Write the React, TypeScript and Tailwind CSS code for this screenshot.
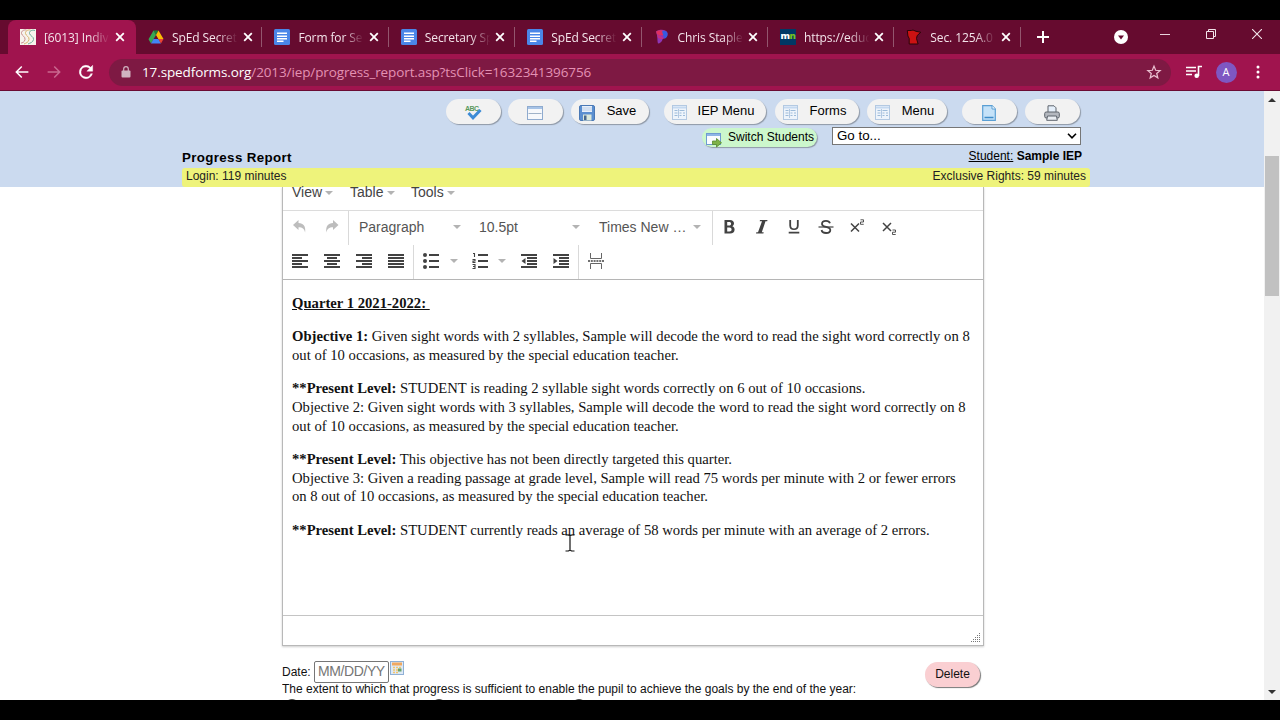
import type { ReactNode } from 'react'

const tabs = [
  { label: '[6013] Indiv', icon: <SpedIcon />, active: true },
  { label: 'SpEd Secret', icon: <DriveIcon /> },
  { label: 'Form for Se', icon: <DocsIcon /> },
  { label: 'Secretary Sp', icon: <DocsIcon /> },
  { label: 'SpEd Secret', icon: <DocsIcon /> },
  { label: 'Chris Staple', icon: <PeardeckIcon /> },
  { label: 'https://educ', icon: <MnIcon /> },
  { label: 'Sec. 125A.0', icon: <MinnesotaIcon /> },
]

function SpedIcon() {
  return (
    <svg viewBox="0 0 16 16" className="h-4 w-4 bg-[#f7f3ec]" fill="none" strokeWidth="1">
      <path d="M6.500 1C4 .5 1 2 1.500 4.500s4 3 3.500 6S2 14 1 14" stroke="#c98d8d" />
      <path d="M10.500 1C8 .5 5 2 5.500 4.500s4 3 3.500 6S6 14 4 15" stroke="#d8b36a" />
      <path d="M15 1.500C12 .5 9 2 9.500 4.500s4.500 3 4 6S10 14 8 15" stroke="#6fae9c" />
    </svg>
  )
}

function DriveIcon() {
  return (
    <svg viewBox="0 0 16 16" className="h-4 w-4">
      <path d="M5.500 1.500h5L8 6z" fill="#188038" />
      <path d="M5.500 1.500 8 6 3 14.500.500 10.300z" fill="#34a853" />
      <path d="M10.500 1.500 15.500 10H10.400L8 6z" fill="#fbbc04" />
      <path d="M5.500 10h4.900L13 14.500H3z" fill="#4285f4" />
      <path d="M10.400 10h5.100L13 14.500z" fill="#ea4335" />
    </svg>
  )
}

function DocsIcon() {
  return (
    <svg viewBox="0 0 16 16" className="h-4 w-4">
      <rect width="16" height="16" rx="1.500" fill="#4a86e8" />
      <path d="M3 4.200h10M3 7.200h10M3 9.800h10M3 12.300h6.500" stroke="#fff" strokeWidth="1.400" />
    </svg>
  )
}

function PeardeckIcon() {
  return (
    <svg viewBox="0 0 16 16" className="h-4 w-4">
      <path d="M2 2.500c3-2.300 10-2.500 11.300 1 1 4-2 6-4.600 6.500-.7 3-2.700 4.300-4.700 4.500C3 11 4 8 2 2.500z" fill="#8e36b5" />
      <path d="M2.200 2.500c3-2 8.300-1.500 9.300 2-2 2-5 2.700-8.600.8z" fill="#e0305f" />
      <path d="M8 2.500c2-1.500 5-.5 5.500 2s-1 4.500-3 5.200z" fill="#365be0" />
      <path d="M3.200 6c2 0 5 1.500 6 3.500-1 1-3 .5-5.200-.5z" fill="#c52f83" />
    </svg>
  )
}

function MnIcon() {
  return (
    <span className="flex h-4 w-4 items-center justify-center bg-[#003865] pb-0.5 font-['Open_Sans',sans-serif] text-[9.500px] leading-none font-extrabold tracking-[-0.6px] text-white">
      m<span className="text-[#78be21]">n</span>
    </span>
  )
}

function MinnesotaIcon() {
  return (
    <svg viewBox="0 0 16 16" className="h-4 w-4">
      <path d="M1.300 1.500h4L7 1l3 1.300 4.800 1-3.600 3.200-.7 3 1.600 5.500H3.200V9.500L1.900 7z" fill="#cc1212" stroke="#2b0508" strokeWidth="1" />
    </svg>
  )
}

function TabStrip() {
  return (
    <div className="flex h-[34px] bg-[#660b2f] pl-2">
      {tabs.map((tab, i) => (
        <div
          key={i}
          className={`flex shrink-0 items-center pl-3 ${
            tab.active ? 'w-[128px] rounded-t-lg bg-[#a0144e]' : 'w-[126.400px]'
          }`}
        >
          <span className="w-4 shrink-0">{tab.icon}</span>
          <span className="ml-[8px] w-[78px] shrink-0 pt-px text-[12px] tracking-[-0.1px] whitespace-nowrap text-[#f3e4ea] [mask-image:linear-gradient(to_right,black_58%,transparent_84%)]">
            {tab.label}
          </span>
          <svg viewBox="0 0 10 10" className="ml-[-7.500px] h-[10px] w-[10px] shrink-0" stroke="#fff" strokeWidth="1.800">
            <path d="M1.200 1.200l7.600 7.600M8.800 1.200 1.200 8.800" />
          </svg>
          {!tab.active && <span className="ml-auto h-5 w-px bg-[#93566e]" />}
        </div>
      ))}
      <div className="flex w-[44px] items-center justify-center">
        <svg viewBox="0 0 12 12" className="h-3 w-3" stroke="#fff" strokeWidth="2">
          <path d="M6 0v12M0 6h12" />
        </svg>
      </div>
      <svg viewBox="0 0 14 14" className="mt-[10px] ml-[49px] h-[14px] w-[14px]">
        <circle cx="7" cy="7" r="7" fill="#fff" />
        <path d="M4 5.500h6L7 9.500z" fill="#660b2f" />
      </svg>
      <svg viewBox="0 0 10 10" className="mt-[9px] ml-[32.500px] h-[10px] w-[10px]" stroke="#e9d3dc">
        <path d="M0 5.500h10" />
      </svg>
      <svg viewBox="0 0 10 10" className="mt-[9px] ml-[35.500px] h-[10px] w-[10px]" stroke="#f3e4ea" fill="none">
        <path d="M.500 2.500h7v7h-7zM2.500 2.500v-2h7v7h-2" />
      </svg>
      <svg viewBox="0 0 10 10" className="mt-[9px] ml-[36px] h-[10px] w-[10px]" stroke="#f3e4ea" strokeWidth="1.100">
        <path d="M0 0l10 10M10 0 0 10" />
      </svg>
    </div>
  )
}

function AddressBar() {
  return (
    <div className="flex h-[37px] items-center border-b border-[#6b0b33] bg-[#a0144e]">
      <svg viewBox="0 0 24 24" className="ml-[13px] h-[18px] w-[18px]" fill="#fff">
        <path d="M20.500 11H6.800l5.600-5.600L11 4l-8 8 8 8 1.400-1.400L6.800 13h13.700z" />
      </svg>
      <svg viewBox="0 0 24 24" className="ml-[14px] h-[18px] w-[18px]" fill="#c9688f">
        <path d="M3.500 11h13.700l-5.600-5.600L13 4l8 8-8 8-1.400-1.400 5.600-5.600H3.500z" />
      </svg>
      <svg viewBox="0 0 24 24" className="ml-[13px] h-[20px] w-[20px]" fill="#fff">
        <path d="M17.650 6.350A8 8 0 1 0 19.730 14h-2.080A6 6 0 1 1 12 6c1.660 0 3.140.69 4.220 1.780L13 11h7V4z" stroke="#fff" strokeWidth=".5" />
      </svg>
      <div className="ml-[13px] flex h-[27px] w-[1062px] items-center rounded-full bg-[#7e1943] pr-[9px] pl-[12px]">
        <svg viewBox="0 0 10 12" className="h-3 w-[10px]">
          <rect x=".5" y="4.500" width="9" height="7" rx="1" fill="#d0b3c0" />
          <path d="M2.700 5V3a2.300 2.300 0 0 1 4.600 0v2" fill="none" stroke="#d0b3c0" strokeWidth="1.200" />
        </svg>
        <span className="ml-[11px] text-[13.500px] tracking-[-0.115px] whitespace-nowrap text-[#e391b3]">
          <span className="text-white">17.spedforms.org</span>/2013/iep/progress_report.asp?tsClick=1632341396756
        </span>
        <svg viewBox="0 0 24 24" className="ml-auto h-[16px] w-[16px]" fill="none" stroke="#eabfd0" strokeWidth="1.900">
          <path d="M12 3.200l2.500 6.200 6.700.5-5.100 4.300 1.600 6.500L12 17.200l-5.700 3.500 1.600-6.500-5.100-4.300 6.700-.5z" />
        </svg>
      </div>
      <svg viewBox="0 0 16 14" className="ml-[15px] h-[14px] w-4" stroke="#fff" strokeWidth="1.600" fill="none">
        <path d="M0 2.500h10M0 6h10M0 9.500h6M12.500 11V1.500H16" />
        <circle cx="10.700" cy="10.800" r="1.500" fill="#fff" />
      </svg>
      <span className="ml-[13.500px] flex h-[21px] w-[21px] items-center justify-center rounded-full bg-[#7e57c2] text-[11px] text-white">A</span>
      <svg viewBox="0 0 4 14" className="ml-[19px] h-[14px] w-1" fill="#fff">
        <circle cx="2" cy="2" r="1.500" />
        <circle cx="2" cy="7" r="1.500" />
        <circle cx="2" cy="12" r="1.500" />
      </svg>
    </div>
  )
}

function FormIcon() {
  return (
    <svg viewBox="0 0 15 15" className="h-[15px] w-[15px]">
      <rect x=".5" y=".5" width="14" height="14" fill="#eef4fb" stroke="#b3c9e2" />
      <path d="M1 2.500h13" stroke="#c4d9f0" strokeWidth="2" />
      <path d="M2.500 5.500h3M2.500 8h3M2.500 10.500h3M7.500 5.500h5M7.500 8h2M7.500 10.500h2M11 8h2M11 10.500h2" stroke="#9dbbd9" />
      <path d="M6.500 4v9" stroke="#b3c9e2" />
    </svg>
  )
}

function SaveIcon() {
  return (
    <svg viewBox="0 0 16 16" className="h-4 w-4">
      <rect x=".5" y=".5" width="15" height="15" rx="1.500" fill="#5b8fd0" stroke="#4b79b5" />
      <rect x="3" y="1" width="10" height="6" fill="#e8f0fa" />
      <path d="M3 3h10M3 5h10" stroke="#a9c1df" strokeWidth=".7" />
      <rect x="4" y="9.500" width="8.500" height="6" fill="#dbe8da" />
      <rect x="5" y="10.500" width="2.500" height="4.500" fill="#49698d" />
    </svg>
  )
}

function SpellIcon() {
  return (
    <svg viewBox="0 0 18 16" className="h-4 w-[18px]">
      <text x="1" y="6" fontSize="7" fontWeight="bold" fontFamily="Liberation Sans, sans-serif" fill="#5b9a5f" textLength="14">ABC</text>
      <path d="M4.500 8l4.500 4.800L16.500 5" fill="none" stroke="#3c8bd6" strokeWidth="3" />
    </svg>
  )
}

function WindowIcon() {
  return (
    <svg viewBox="0 0 16 14" className="h-[14px] w-4">
      <rect x=".5" y=".5" width="15" height="13" fill="#f6f8fb" stroke="#8fabcf" />
      <path d="M1 2h14" stroke="#a7c3e6" strokeWidth="2" />
      <path d="M1.500 7.500h13" stroke="#9fb2c8" />
    </svg>
  )
}

function PageIcon() {
  return (
    <svg viewBox="0 0 14 16" className="h-4 w-[14px]">
      <path d="M.700.700h9.300l3.300 3.300v11.300H.700z" fill="#c5e2f8" stroke="#5a9fd4" strokeWidth="1.200" />
      <path d="M10 .7V4h3.300" fill="#fff" stroke="#5a9fd4" />
      <path d="M2.500 12.500h9" stroke="#3f8cc9" strokeWidth="1.500" />
    </svg>
  )
}

function PrinterIcon() {
  return (
    <svg viewBox="0 0 16 16" className="h-4 w-4" stroke="#5e646d">
      <path d="M4 8V.800h6l2 2V8" fill="#e5effa" />
      <rect x=".7" y="7" width="14.600" height="6" rx="1.500" fill="#b4b8bf" />
      <path d="M3.500 11h9l.8 4.300H2.700z" fill="#e9edf2" />
    </svg>
  )
}

const pill = 'flex h-[25px] shrink-0 items-center rounded-full bg-[#f2f2f2] shadow-[1px_1px_1px_#8f98a6]'

function HeaderButton({ icon, label, className }: { icon: ReactNode; label?: string; className: string }) {
  return (
    <button className={`${pill} ${label ? 'pl-2' : 'justify-center pr-px'} ${className}`}>
      <span className="mt-[2px]">{icon}</span>
      {label && <span className="flex-1 pr-[1px] pb-[2px] text-center text-[13px] leading-none">{label}</span>}
    </button>
  )
}

function PageHeader() {
  return (
    <header className="flex h-24 flex-col bg-[#cbdaef] pl-[182px]">
      <div className="mt-2 flex h-[28px] w-[899px] pl-[264px]">
        <HeaderButton className="w-[55px]" icon={<SpellIcon />} />
        <HeaderButton className="ml-[7px] w-[55px]" icon={<WindowIcon />} />
        <HeaderButton className="ml-[8px] w-[78px]" icon={<SaveIcon />} label="Save" />
        <HeaderButton className="ml-[15px] w-[102px]" icon={<FormIcon />} label="IEP Menu" />
        <HeaderButton className="ml-[9px] w-[84px]" icon={<FormIcon />} label="Forms" />
        <HeaderButton className="ml-[8px] w-[80px]" icon={<FormIcon />} label="Menu" />
        <HeaderButton className="ml-[15px] w-[55px]" icon={<PageIcon />} />
        <HeaderButton className="ml-[8px] w-[55px]" icon={<PrinterIcon />} />
      </div>
      <div className="flex h-[20px] w-[899px] justify-end">
        <button className="mt-px flex h-[19px] w-[115px] items-center rounded-full bg-[#ccf7cc] pl-1 text-[12px] shadow-[1px_1px_1px_#8f98a6]">
          <svg viewBox="0 0 16 16" className="mt-1 h-4 w-4 shrink-0">
            <rect x=".5" y="1.500" width="14" height="11" fill="#fafcff" stroke="#6f9bd1" />
            <path d="M1 3h13" stroke="#8fb6e6" strokeWidth="2" />
            <path d="M6.500 9h4V6.500l5 4.300-5 4.200v-2.500h-4z" fill="#7fb248" stroke="#568a2c" strokeWidth=".8" />
          </svg>
          <span className="ml-[6px] pb-[2px] whitespace-nowrap">Switch Students</span>
        </button>
        <div className="ml-[15px] flex h-[18px] w-[249px] items-center justify-between border border-[#767676] bg-white pr-[3px] pl-[4px] text-[13.333px]">
          <span className="leading-none">Go to...</span>
          <svg viewBox="0 0 10 6" className="h-[6px] w-[10px]" fill="none" stroke="#000" strokeWidth="1.600">
            <path d="M1 .800l4 4 4-4" />
          </svg>
        </div>
      </div>
      <div className="flex h-[21px] w-[900px] items-start justify-between">
        <h1 className="mt-[4px] text-[13.333px] leading-none font-bold tracking-[0.360px]">Progress Report</h1>
        <p className="mt-[3px] text-[12px] leading-none">
          <span className="underline">Student:</span> <b>Sample IEP</b>
        </p>
      </div>
      <div className="flex h-[19px] w-[908px] justify-between rounded-[3px] bg-[#eef37b] pt-[2px] pr-[4px] pl-[4px] text-[12px] leading-[13px] text-[#222]">
        <span>Login: 119 minutes</span>
        <span>Exclusive Rights: 59 minutes</span>
      </div>
    </header>
  )
}

function Caret({ className = '' }: { className?: string }) {
  return (
    <svg viewBox="0 0 8 4" className={`h-1 w-2 shrink-0 ${className}`} fill="#b3b3b3">
      <path d="M0 0h8L4 4z" />
    </svg>
  )
}

function ToolButton({ children }: { children: ReactNode }) {
  return (
    <button className="flex h-full w-8 shrink-0 items-center justify-center pb-[2px]">
      <svg viewBox="0 0 16 16" className="h-4 w-4" fill="#424242">
        {children}
      </svg>
    </button>
  )
}

function Divider() {
  return <span className="h-full w-px shrink-0 bg-[#d9d9d9]" />
}

function Dropdown({ label, className }: { label: string; className: string }) {
  return (
    <button className={`flex shrink-0 items-center justify-between pb-[2px] ${className}`}>
      <span className="whitespace-nowrap">{label}</span>
      <Caret />
    </button>
  )
}

function EditorToolbar() {
  return (
    <div className="flex h-[69px] shrink-0 flex-col border-b border-[#b5b5b5] text-[14px] text-[#555]">
      <div className="flex h-[34px] pl-px">
        <ToolButton>
          <path d="M1 6 6.500 1v3c5 0 7.500 3.500 6.600 9.500C12.300 9.800 10.500 8.300 6.500 8.300V11z" fill="#bdbdbd" />
        </ToolButton>
        <ToolButton>
          <path d="M14.500 6 9 1v3C4 4 1.500 7.500 2.400 13.500 3.200 9.800 5 8.300 9 8.300V11z" fill="#bdbdbd" />
        </ToolButton>
        <Divider />
        <Dropdown label="Paragraph" className="ml-[10px] w-[102px]" />
        <Dropdown label="10.5pt" className="ml-[18px] w-[101px]" />
        <Dropdown label="Times New …" className="ml-[19px] w-[102px]" />
        <span className="w-[11px]" />
        <Divider />
        <ToolButton>
          <path d="M3.500 1h5.500c2.500 0 4 1.300 4 3.300 0 1.300-.7 2.400-1.700 2.900 1.500.5 2.300 1.700 2.300 3.200 0 2.700-1.700 4.100-4.500 4.100H3.500zm2.700 2v3.500h1.900c1.300 0 2-.6 2-1.800S9.400 3 8.100 3zm0 5.500v4h2.200c1.500 0 2.200-.7 2.200-2s-.8-2-2.200-2z" />
        </ToolButton>
        <span className="w-px" />
        <ToolButton>
          <path d="M6 1h7.500l-.3 1.200h-1.700L7.800 13.300h1.900l-.3 1.200H2l.3-1.200H4L8 2.200H5.700z" />
        </ToolButton>
        <ToolButton>
          <path d="M3.300 1h1.800v5.500c0 2 1 3 2.900 3s2.900-1 2.900-3V1h1.800v5.500c0 3-1.700 4.600-4.700 4.600S3.300 9.500 3.300 6.500zM2.700 12.800h10.600v1.700H2.700z" />
        </ToolButton>
        <ToolButton>
          <path d="M.500 8h15" stroke="#424242" strokeWidth="1.200" />
          <path d="M12 4.300C11.500 2.700 10 1.900 8 1.900c-2.400 0-4 1-4 3C4 9 12.300 6.500 12.300 11c0 2-1.700 3-4.200 3-2.600 0-4.200-1-4.500-3" fill="none" stroke="#424242" strokeWidth="1.800" />
        </ToolButton>
        <ToolButton>
          <path d="M1 4.500l8 8M9 4.500l-8 8" stroke="#424242" strokeWidth="1.500" />
          <path d="M10.500.800h3V3h-3v2.300h3.200" fill="none" stroke="#424242" strokeWidth=".9" />
        </ToolButton>
        <ToolButton>
          <path d="M1 4l8 8M9 4l-8 8" stroke="#424242" strokeWidth="1.500" />
          <path d="M10.500 11h3v2.200h-3v2.300h3.200" fill="none" stroke="#424242" strokeWidth=".9" />
        </ToolButton>
      </div>
      <div className="flex h-[34px] pl-px">
        <ToolButton>
          <path d="M0 1h16v2H0zM0 4h10v2H0zM0 7h16v2H0zM0 10h10v2H0zM0 13h16v2H0z" />
        </ToolButton>
        <ToolButton>
          <path d="M0 1h16v2H0zM3 4h10v2H3zM0 7h16v2H0zM3 10h10v2H3zM0 13h16v2H0z" />
        </ToolButton>
        <ToolButton>
          <path d="M0 1h16v2H0zM6 4h10v2H6zM0 7h16v2H0zM6 10h10v2H6zM0 13h16v2H0z" />
        </ToolButton>
        <ToolButton>
          <path d="M0 1h16v2H0zM0 4h16v2H0zM0 7h16v2H0zM0 10h16v2H0zM0 13h16v2H0z" />
        </ToolButton>
        <span className="w-px" />
        <Divider />
        <span className="w-px" />
        <ToolButton>
          <circle cx="2" cy="2" r="2" />
          <circle cx="2" cy="8" r="2" />
          <circle cx="2" cy="14" r="2" />
          <path d="M6 1h10v2H6zM6 7h10v2H6zM6 13h10v2H6z" />
        </ToolButton>
        <Caret className="mb-[2px] ml-[3px] self-center" />
        <span className="w-[6px]" />
        <ToolButton>
          <path d="M6 1h10v2H6zM6 7h10v2H6zM6 13h10v2H6z" />
          <path d="M1 .500h1.500V4M.500 6.500h2.500V8H1v1.500h2.500M.500 11.500h2.500v4H.500M1 13.500h2" fill="none" stroke="#424242" strokeWidth="1.100" />
        </ToolButton>
        <Caret className="mb-[2px] ml-[2px] self-center" />
        <span className="w-[7px]" />
        <ToolButton>
          <path d="M0 1h16v2H0zM6 4h10v2H6zM6 7h10v2H6zM6 10h10v2H6zM0 13h16v2H0zM4.500 5v6L.500 8z" />
        </ToolButton>
        <ToolButton>
          <path d="M0 1h16v2H0zM6 4h10v2H6zM6 7h10v2H6zM6 10h10v2H6zM0 13h16v2H0zM.500 5v6l4-3z" />
        </ToolButton>
        <span className="w-px" />
        <Divider />
        <span className="w-px" />
        <ToolButton>
          <path d="M2.500 0v5.500h11V0M2.500 16v-5.500h11V16" fill="none" stroke="#666" />
          <path d="M0 8h16" stroke="#424242" strokeWidth="1.300" strokeDasharray="2 .8" />
        </ToolButton>
      </div>
    </div>
  )
}

function EditorBody() {
  return (
    <div className="relative h-[335px] shrink-0 pt-[14px] pl-[9px] font-['Liberation_Serif',serif] text-[14.667px] leading-[18.700px] whitespace-nowrap text-[#111]">
      <p className="font-bold whitespace-pre underline">Quarter 1 2021-2022: </p>
      <p className="mt-[14.500px]">
        <b>Objective 1:</b> Given sight words with 2 syllables, Sample will decode the word to read the sight word correctly on 8
        <br />
        out of 10 occasions, as measured by the special education teacher.
      </p>
      <p className="mt-[14.500px]">
        <b>**Present Level:</b> STUDENT is reading 2 syllable sight words correctly on 6 out of 10 occasions.
        <br />
        Objective 2: Given sight words with 3 syllables, Sample will decode the word to read the sight word correctly on 8
        <br />
        out of 10 occasions, as measured by the special education teacher.
      </p>
      <p className="mt-[14.700px]">
        <b>**Present Level:</b> This objective has not been directly targeted this quarter.
        <br />
        Objective 3: Given a reading passage at grade level, Sample will read 75 words per minute with 2 or fewer errors
        <br />
        on 8 out of 10 occasions, as measured by the special education teacher.
      </p>
      <p className="mt-[14.600px]">
        <b>**Present Level:</b> STUDENT currently reads an average of 58 words per minute with an average of 2 errors.
      </p>
      {/* text cursor */}
      <svg viewBox="0 0 10 18" className="absolute top-[254px] left-[282px] h-[18px] w-[10px]" fill="none" stroke="#111" strokeWidth="1.200">
        <path d="M.500 1h3L5 2l1.500-1h3M5 2v14M.500 17h3L5 16l1.500 1h3" />
      </svg>
    </div>
  )
}

function Editor() {
  return (
    <div className="ml-[282px] flex h-[459px] w-[702px] flex-col border-x border-b border-[#b8b8b8] shadow-[0_1px_2px_rgba(0,0,0,0.2)]">
      <div className="flex h-[24px] shrink-0 border-b border-[#dcdcdc] pl-[9px] text-[14px] leading-[11px] text-[#444]">
        <button className="flex w-[58px] items-start">
          View <Caret className="mt-1 ml-[3px]" />
        </button>
        <button className="flex w-[61px] items-start">
          Table <Caret className="mt-1 ml-1" />
        </button>
        <button className="flex items-start">
          Tools <Caret className="mt-1 ml-[3px]" />
        </button>
      </div>
      <EditorToolbar />
      <EditorBody />
      <div className="flex flex-1 items-end justify-end border-t border-[#c4c4c4] pr-[2px] pb-[3px]">
        <svg viewBox="0 0 10 10" className="h-[10px] w-[10px]" stroke="#777" strokeDasharray="1 1">
          <path d="M8 1.500h2M6 3.500h4M4 5.500h6M2 7.500h8M0 9.500h10" />
        </svg>
      </div>
    </div>
  )
}

function ProgressFields() {
  return (
    <div className="ml-[282px] h-[54px] w-[702px] overflow-hidden text-[12px] text-[#111]">
      <div className="flex h-[37px] pt-[14px]">
        <span className="mt-[5px] w-[32px] leading-[14px]">Date:</span>
        <input
          placeholder="MM/DD/YY"
          className="mt-px h-[22px] w-[75px] rounded-[2px] border border-[#767676] bg-white pb-[2px] pl-[3px] text-[14px] tracking-[-0.400px] placeholder:text-[#757575]"
        />
        <svg viewBox="0 0 14 14" className="mt-px ml-[1px] h-[14px] w-[14px]">
          <rect x=".5" y=".5" width="13" height="13" fill="#dde9f6" stroke="#8fb0d6" />
          <rect x="2" y="1.500" width="10" height="3" fill="#f0a860" />
          <path d="M3 6.500h8M3 9h8M3 11.500h5" stroke="#f5c56b" strokeWidth="1.500" strokeDasharray="2 1" />
          <path d="M8 7.500h3.500v3H8z" fill="#6ba368" />
        </svg>
        <button className="ml-auto mt-[2px] mr-[4px] h-[25px] w-[55px] shrink-0 rounded-full bg-[#facfd2] pb-[2px] text-[12px] shadow-[1px_1px_1px_#777]">
          Delete
        </button>
      </div>
      <p className="leading-[13px] whitespace-nowrap">
        The extent to which that progress is sufficient to enable the pupil to achieve the goals by the end of the year:
      </p>
      <div className="flex pt-[3px] pl-[5px]">
        <span className="h-3 w-[10px] rounded-sm border border-[#555]" />
        <span className="ml-[137px] h-3 w-[10px] rounded-sm border border-[#555]" />
        <span className="ml-[130px] h-3 w-[10px] rounded-sm border border-[#555]" />
      </div>
    </div>
  )
}

function Scrollbar() {
  return (
    <div className="flex w-4 flex-col items-center bg-[#f1f1f1]">
      <svg viewBox="0 0 8 4" className="mt-[7px] h-1 w-2" fill="#333">
        <path d="M4 0l4 4H0z" />
      </svg>
      <div className="mt-[54px] h-[140px] w-[14px] bg-[#c1c1c1]" />
      <svg viewBox="0 0 8 4" className="mt-auto mb-[6px] h-1 w-2" fill="#333">
        <path d="M0 0h8L4 4z" />
      </svg>
    </div>
  )
}

export default function App() {
  return (
    <div className="h-[720px] w-[1280px] overflow-hidden bg-black py-5">
      <div className="font-['Open_Sans',sans-serif]">
        <TabStrip />
        <AddressBar />
      </div>
      <div className="flex h-[609px] bg-white font-['Liberation_Sans',sans-serif] text-black">
        <main className="w-[1264px] overflow-hidden">
          <PageHeader />
          <Editor />
          <ProgressFields />
        </main>
        <Scrollbar />
      </div>
    </div>
  )
}
